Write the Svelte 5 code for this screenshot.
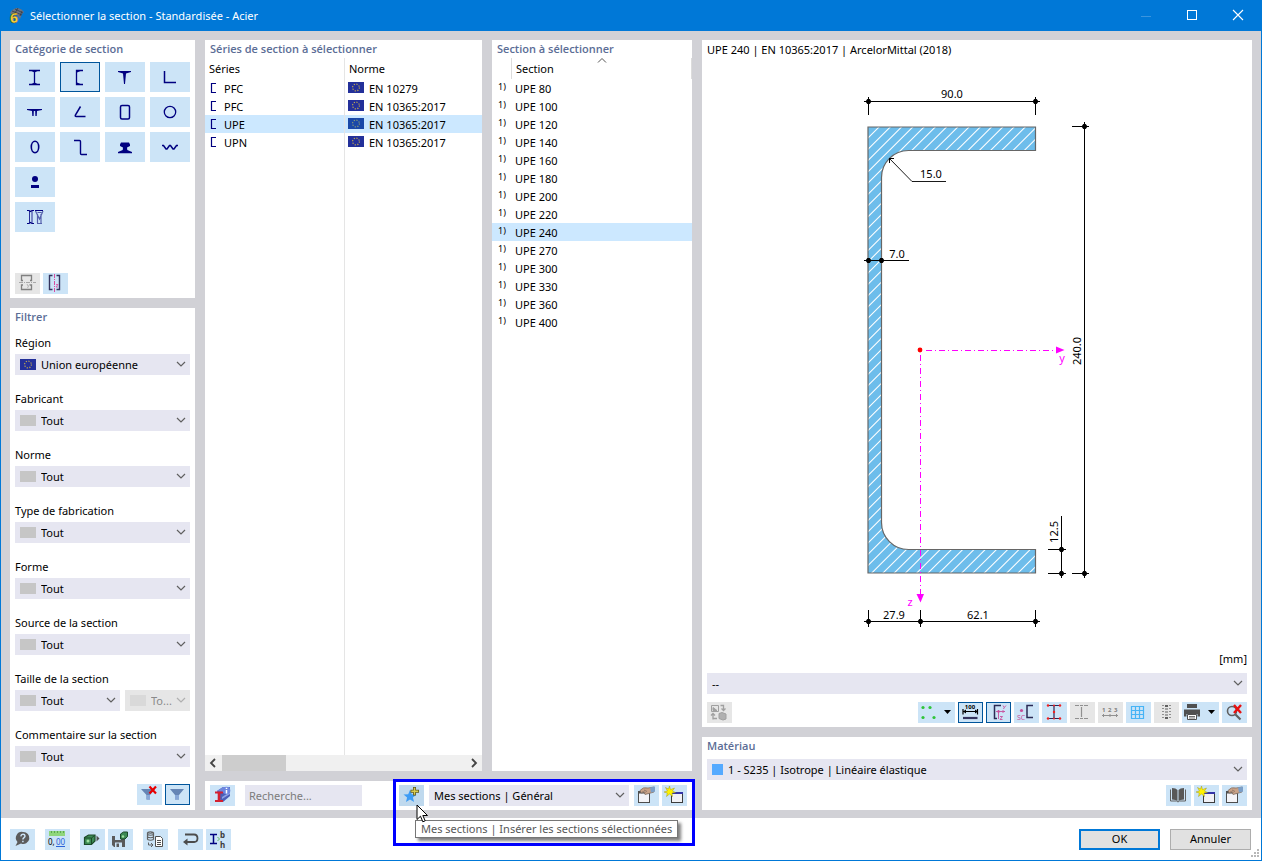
<script>
  const series = [
    { name: 'PFC', norm: 'EN 10279' },
    { name: 'PFC', norm: 'EN 10365:2017' },
    { name: 'UPE', norm: 'EN 10365:2017' },
    { name: 'UPN', norm: 'EN 10365:2017' }
  ];
  const sizes = [80, 100, 120, 140, 160, 180, 200, 220, 240, 270, 300, 330, 360, 400];
  let selectedSeries = $state(2);
  let selectedSize = $state(240);
  let selectedShape = $state(1);

  const shapes = [
    'Profilé en I', 'Profilé en U', 'Profilé en T', 'Cornière',
    'Double T', 'Cornière inclinée', 'Tube rectangulaire', 'Tube circulaire',
    'Tube elliptique', 'Profilé en Z', 'Rail', 'Tôle ondulée',
    'Barre pleine', 'Composée'
  ];

  const hatch = Array.from({ length: 56 }, (_, i) => 1006 - 11.25 + i * 11.25);
</script>

{#snippet chevron()}
  <svg class="chev" width="18" height="21" viewBox="0 0 18 21" aria-hidden="true">
    <path d="M5 8l4 4 4-4" fill="none" stroke="#606060" stroke-width="1.2" />
  </svg>
{/snippet}

{#snippet flag(sel)}
  <svg class="flag" width="16" height="11" viewBox="0 0 16 11" aria-hidden="true">
    <rect width="16" height="11" fill={sel ? '#1a48a8' : '#23309a'} />
    <circle cx="8" cy="5.5" r="3.4" fill="none" stroke={sel ? '#8c9c78' : '#c0a850'} stroke-width="1.2" stroke-dasharray="1.2 1.47" />
  </svg>
{/snippet}

{#snippet combo(id, text, eu, off)}
  <div class="combo" class:off>
    {#if eu}{@render flag(false)}{:else}<span class="swatch"></span>{/if}
    <select {id} disabled={off} aria-label={off ? 'Taille maximale' : undefined}><option>{text}</option></select>
    {@render chevron()}
  </div>
{/snippet}

{#snippet field(id, label, text, eu)}
  <div class="field">
    <label for={id}>{label}</label>
    {@render combo(id, text, eu, false)}
  </div>
{/snippet}

{#snippet windowIcon(star)}
  <svg width="25" height="21" viewBox="0 0 25 21" aria-hidden="true">
    {#if star}
      <rect x="9.500" y="7.500" width="11" height="10" fill="#f1f1f6" stroke="#3c3c3c" />
      <rect x="10" y="7" width="11" height="2" fill="#3434a8" />
      <path d="M7.500 1l1 3.600L12.500 3l-2 3 3 1.500-3.500.5.500 3.500-3-2.500-3 2.500.8-3.500L2 7l3.500-1L3.500 2.500 6.500 4z" fill="#fff200" stroke="#a09a20" stroke-width=".5" />
    {:else}
      <rect x="4.500" y="6.500" width="11" height="11" fill="#f4f4f8" stroke="#4c4c4c" />
      <rect x="4" y="6" width="12" height="2.500" fill="#505050" />
      <path d="M6 5.500Q9 1.500 14 3l6-1v5l-5 1.500-4 1-1-2-3 .5z" fill="#c9a287" stroke="#75665c" stroke-width=".7" />
      <path d="M10 5l3 1.500M8.500 6.500l3 1" stroke="#75665c" stroke-width=".7" />
      <path d="M16 2.500l5-1v5l-4 1z" fill="#7b9fc8" />
    {/if}
  </svg>
{/snippet}

<div class="window">
  <header>
    <svg width="18" height="18" viewBox="0 0 18 18" aria-hidden="true">
      <path d="M3 6Q6 1 11 1q4 1 6 4l-2 2-2 5-3-4-6-1z" fill="#6d7482" />
      <path d="M5 4l10 4M8 2l8 4M11 1L8 6M15 4l-2 5" stroke="#323c4a" stroke-width=".8" />
      <text x="3" y="16" font-size="14" font-weight="800" fill="#fbd43c" stroke="#6a541a" stroke-width=".5">6</text>
    </svg>
    <h1>Sélectionner la section - Standardisée - Acier</h1>
    <div class="sys">
      <button aria-label="Réduire"><svg width="46" height="30" viewBox="0 0 46 30"><path d="M18 15.500h10" stroke="#3a95df" /></svg></button>
      <button aria-label="Agrandir"><svg width="46" height="30" viewBox="0 0 46 30"><rect x="18.500" y="9.500" width="9" height="9" fill="none" stroke="#fff" /></svg></button>
      <button aria-label="Fermer"><svg width="46" height="30" viewBox="0 0 46 30"><path d="M18 9l10 10M28 9L18 19" stroke="#fff" stroke-width="1.100" /></svg></button>
    </div>
  </header>

  <main>
    <div class="col left">
      <section class="panel categories">
        <h2>Catégorie de section</h2>
        <div class="shapes">
          {#each shapes as s, i}
            <button class="tile" class:active={selectedShape === i} class:solo={i > 11} aria-label={s} onclick={() => (selectedShape = i)}>
              <svg width="40" height="30" viewBox="0 0 40 30" fill="none" stroke="#000080" stroke-width="1.300">
                {#if i === 0}<path d="M14 8.500h11M14 22.500h11M19.500 8.500v14" /><path d="M16.500 9l3 1.500 3-1.500zM16.500 22l3-1.500 3 1.500z" fill="#000080" stroke="none" />
                {:else if i === 1}<path d="M23 8.500H16.500v14H23" /><path d="M17 9h3.500L17 10.500V20.500l3.500 1.500H17z" fill="#000080" stroke="none" />
                {:else if i === 2}<path d="M13 9h13v1l-5 1.500L20 22h-1L18 11.500 13 10z" fill="#000080" stroke="none" />
                {:else if i === 3}<path d="M14.500 9v11.500H26" stroke-width="1.500" />
                {:else if i === 4}<path d="M12 12h15v1l-5 1L21.700 19h-1.300l-.2-5h-1.400L18.600 19h-1.300L17 14l-5-1z" fill="#000080" stroke="none" />
                {:else if i === 5}<path d="M20.500 9.500L15.400 18q-.6 1.500.8 1.500h9.300" stroke-width="1.500" />
                {:else if i === 6}<rect x="15.500" y="8.500" width="9" height="13.500" rx="1.500" stroke-width="1.500" />
                {:else if i === 7}<circle cx="20" cy="15" r="5.700" />
                {:else if i === 8}<ellipse cx="20" cy="15" rx="3.700" ry="5.700" stroke-width="1.600" />
                {:else if i === 9}<path d="M14 8.500h5.500q1 0 1 1v12q0 1 1 1H27" stroke-width="1.400" />
                {:else if i === 10}<path d="M16 10.500h8q1.500 2 1 3.500L22 15.500l.3 2.500 4.700 2v1.200H13V20l4.700-2 .3-2.500L15 14q-.5-1.500 1-3.500z" fill="#000080" stroke="none" />
                {:else if i === 11}<path d="M12 13.500h1.500l2.500 3.500h1l2.500-3.500h1l2.500 3.500h1l2.500-3.500H28" stroke-width="1.500" />
                {:else if i === 12}<circle cx="20" cy="12" r="3" fill="#000080" stroke="none" /><path d="M16 19.500h8" stroke-width="3" />
                {:else}<path d="M12 8.500h2l1.500 1 1.500-1h2M12 21.500h2l1.500-1 1.500 1h2" stroke-width="1.200" /><path d="M14.500 9v12M17 9v12" stroke-width=".8" /><path d="M20.500 9l4 8 3.500-8M22.500 12v9M26 12v9M22 21.500h5M22.500 10.500h4" stroke="#5560ac" stroke-width="1.200" /><path d="M20 8.500h8" stroke-width="1" />{/if}
              </svg>
            </button>
          {/each}
        </div>
        <div class="tools">
          <button class="tool gray" aria-label="Symétrie horizontale" disabled>
            <svg width="25" height="21" viewBox="0 0 25 21" fill="none" stroke="#808080">
              <path d="M8 7.500H6.500v-5h10v5H15M8 12H6.500v4.500h10V12H15" stroke-width="1.300" /><path d="M4 9.500h17" stroke="#a8a8a8" stroke-dasharray="4 1 1 1" /><path d="M12 11l1.300 2.500L15 11M13.400 13.500L12.500 15" stroke="#b4b4b4" />
            </svg>
          </button>
          <button class="tool" aria-label="Symétrie verticale">
            <svg width="25" height="21" viewBox="0 0 25 21" fill="none" stroke="#33335e" stroke-width="1.400">
              <path d="M9.500 2.500h-3v14h3M13.500 2.500h3v14h-3" /><path d="M11.500 1v19" stroke="#d84ca0" stroke-width="1" stroke-dasharray="4 1 1 1" /><path d="M13 11.500h2l-2 2.500h2" stroke="#d84ca0" stroke-width=".8" />
            </svg>
          </button>
        </div>
      </section>

      <section class="panel filters">
        <h2>Filtrer</h2>
        {@render field('region', 'Région', 'Union européenne', true)}
        {@render field('maker', 'Fabricant', 'Tout', false)}
        {@render field('norm', 'Norme', 'Tout', false)}
        {@render field('fab', 'Type de fabrication', 'Tout', false)}
        {@render field('form', 'Forme', 'Tout', false)}
        {@render field('source', 'Source de la section', 'Tout', false)}
        <div class="field">
          <label for="size">Taille de la section</label>
          <div class="pair">
            {@render combo('size', 'Tout', false, false)}
            {@render combo('size-max', 'To...', false, true)}
          </div>
        </div>
        {@render field('comment', 'Commentaire sur la section', 'Tout', false)}
        <div class="tools end">
          <button class="tool" aria-label="Supprimer le filtre">
            <svg width="25" height="21" viewBox="0 0 25 21"><path d="M4 5h14l-5 6v4.500h-3.500V11z" fill="#6585b5" /><path d="M9.500 11h3.500v4.500H9.500z" fill="#88a8d8" /><path d="M12.500 2.500l6.500 7M19 2.500l-6.500 7" stroke="#e80000" stroke-width="2.200" /></svg>
          </button>
          <button class="tool active" aria-label="Filtrer">
            <svg width="25" height="21" viewBox="0 0 25 21"><path d="M5 5h14l-5 6v4.500h-4V11z" fill="#6585b5" /><path d="M10 11h4v4.500h-4z" fill="#88a8d8" /></svg>
          </button>
        </div>
      </section>
    </div>

    <div class="col middle">
      <div class="lists">
        <section class="panel series">
          <h2>Séries de section à sélectionner</h2>
          <table>
            <thead><tr><th>Séries</th><th>Norme</th></tr></thead>
            <tbody>
              {#each series as row, i}
                <tr class:selected={i === selectedSeries} onclick={() => (selectedSeries = i)}>
                  <td><span class="cell">
                    <svg width="8" height="12" viewBox="0 0 8 12" aria-hidden="true"><path d="M8 1.500H3.500v9H8" fill="none" stroke="#000080" stroke-width="1.200" /></svg>
                    <span class="txt">{row.name}</span></span></td>
                  <td><span class="cell">{@render flag(i === selectedSeries)}<span class="txt">{row.norm}</span></span></td>
                </tr>
              {/each}
              <tr class="rest"><td></td><td></td></tr>
            </tbody>
          </table>
          <div class="scroll" aria-hidden="true">
            <svg width="17" height="16" viewBox="0 0 17 16"><path d="M10 4L6 8l4 4" fill="none" stroke="#444" stroke-width="1.800" /></svg>
            <span class="thumb"></span>
            <svg width="17" height="16" viewBox="0 0 17 16"><path d="M7 4l4 4-4 4" fill="none" stroke="#444" stroke-width="1.800" /></svg>
          </div>
        </section>

        <section class="panel sizes">
          <h2>Section à sélectionner</h2>
          <svg class="sort" width="10" height="5" viewBox="0 0 10 5" aria-hidden="true"><path d="M1 4.500l4-4 4 4" fill="none" stroke="#555" /></svg>
          <table>
            <thead><tr><th></th><th>Section</th></tr></thead>
            <tbody>
              {#each sizes as n}
                <tr class:selected={n === selectedSize} onclick={() => (selectedSize = n)}>
                  <td class="mark">1)</td><td class="size">UPE {n}</td>
                </tr>
              {/each}
            </tbody>
          </table>
        </section>
      </div>

      <section class="panel actions">
        <button class="tool" aria-label="Informations sur la section">
          <svg width="25" height="21" viewBox="0 0 25 21">
            <path d="M7 6l6-4h7v9l-7 6h-2z" fill="#4a5fb8" /><path d="M7 6l6-4h7l-6 5z" fill="#6f87dc" /><path d="M12 12l8-5v2l-8 5z" fill="#8ea2e6" />
            <path d="M5 7.500h8M5 16h8" stroke="#d42030" stroke-width="2" /><path d="M9 7v9" stroke="#d42030" stroke-width="2.600" />
            <circle cx="16.500" cy="5.500" r="3.800" fill="#6c86e0" /><path d="M16.500 2.700v1.300M16.500 4.900v3.500" stroke="#fff" stroke-width="1.500" />
          </svg>
        </button>
        <input type="text" placeholder="Recherche..." aria-label="Recherche" />
        <div class="mine">
          <button class="tool hover" aria-label="Insérer les sections sélectionnées" aria-describedby="tip">
            <svg width="25" height="21" viewBox="0 0 25 21">
              <path d="M11 5l1.800 4.300 4.700.3-3.600 3 1.200 4.400-4.100-2.400L7 17l1.100-4.400-3.600-3 4.700-.3z" fill="#3d9cf5" />
              <path d="M15.500 2v8.500M11.500 6.300h8.500" stroke="#5d5a20" stroke-width="3" /><path d="M15.500 2.800v6.900M12.300 6.300h6.900" stroke="#d8cc50" stroke-width="1.400" />
            </svg>
          </button>
          <div class="combo list"><select aria-label="Liste de sections"><option>Mes sections | Général</option></select>{@render chevron()}</div>
          <div class="tools">
            <button class="tool" aria-label="Modifier la liste">{@render windowIcon(false)}</button>
            <button class="tool" aria-label="Nouvelle liste">{@render windowIcon(true)}</button>
          </div>
          <div class="frame"></div>
          <div class="tip" id="tip" role="tooltip">Mes sections | Insérer les sections sélectionnées</div>
          <svg class="cursor" width="13" height="20" viewBox="0 0 13 20" aria-hidden="true"><path d="M1 1v14.500l3.500-3.300 2.300 5.600 2.400-1-2.400-5.300h4.700z" fill="#fff" stroke="#000" /></svg>
        </div>
      </section>
    </div>

    <div class="col right">
      <section class="panel preview">
        <p class="name">UPE 240 | EN 10365:2017 | ArcelorMittal (2018)</p>
        <svg class="drawing" viewBox="702 60 550 590" role="img" aria-label="Coupe UPE 240">
          <defs>
            <clipPath id="shape"><path d="M868 127H1035.500V150.500H908.500A27 27 0 0 0 881.500 177.500V522.500A27 27 0 0 0 908.500 549.500H1035.500V573H868z" /></clipPath>
            <g id="node"><path d="M-3 0L-1.200 -2.500H1.200L3 0 1.200 2.500H-1.200z" fill="#000" /></g>
          </defs>
          <g clip-path="url(#shape)">
            <rect x="860" y="120" width="180" height="460" fill="#6dbdeb" />
            {#each hatch as s}
              <path d="M{s - 580} 580L{s - 120} 120" stroke="#fff" stroke-width="1.100" />
            {/each}
          </g>
          <path d="M868 127H1035.500V150.500H908.500A27 27 0 0 0 881.500 177.500V522.500A27 27 0 0 0 908.500 549.500H1035.500V573H868z" fill="none" stroke="#666" stroke-width="1.200" />
          <g fill="none" stroke="#000">
            <path d="M864 101.500H1040M868.500 97v18M1035.500 97v18" />
            <path d="M1084.500 122V578M1072 126.500h17M1072 573.500h17" />
            <path d="M1061.500 516V578M1048 549.500h18M1048 573.500h18" />
            <path d="M864 621.500H1040M868.500 610v17M920.500 610v17M1035.500 610v17" />
            <path d="M864 260.500H909" />
            <path d="M889 158L912 181.500H946" stroke-width=".9" /><path d="M889.500 163V158.500H894" />
          </g>
          {#each [[868.5, 101.5], [1035.5, 101.5], [1084.5, 126.5], [1084.5, 573.5], [1061.5, 549.5], [1061.5, 573.5], [868.5, 621.5], [920.5, 621.5], [1035.5, 621.5], [868.5, 260.5], [881.5, 260.5]] as [x, y]}
            <use href="#node" {x} {y} />
          {/each}
          <g fill="none" stroke="#f0f"><path d="M926 350.500H1056" stroke-dasharray="6 3 1 3" /><path d="M920.500 355V594" stroke-dasharray="6 3 1 3" /></g>
          <path d="M1056 346.500l8.500 3.500-8.500 3.500zM916.500 594h7.500l-3.500 8.500z" fill="#f0f" />
          <circle cx="920" cy="350" r="2.400" fill="#f00" />
          <g class="dims" text-anchor="middle">
            <text x="952" y="98">90.0</text>
            <text x="931" y="178">15.0</text>
            <text x="897" y="258">7.0</text>
            <text x="894" y="619">27.9</text>
            <text x="978" y="619">62.1</text>
            <text transform="translate(1081 351) rotate(-90)">240.0</text>
            <text transform="translate(1058 532) rotate(-90)">12.5</text>
            <text x="1062" y="362" fill="#f0f">y</text>
            <text x="910" y="606" fill="#f0f">z</text>
          </g>
        </svg>
        <p class="unit">[mm]</p>
        <div class="combo note"><select aria-label="Commentaire"><option>--</option></select>{@render chevron()}</div>
        <div class="tools">
          <button class="tool gray" aria-label="Échanger" disabled>
            <svg width="25" height="21" viewBox="0 0 25 21" fill="none" stroke="#a0a0a0"><path d="M4.500 3.500h7v6h-7z" /><path d="M6 8.500v-3l4 3z" fill="#a0a0a0" /><path d="M13.500 3.500h3v4.500M14.500 6.500l2 2 2-2M6 17.500V12M4 13.500l2-2 2 2M6 16.500h4" stroke-width="1.300" /><path d="M12 11.500l3-1 4 1.500v5l-3 1-4-1.500z" fill="#b0b0b0" /></svg>
          </button>
          <span class="gap"></span>
          <button class="tool wide" aria-label="Points de contrainte">
            <svg width="37" height="21" viewBox="0 0 37 21"><g fill="#2fc43a"><circle cx="5" cy="5.500" r="1.600" /><circle cx="12" cy="5.500" r="1.600" /><circle cx="5" cy="15.500" r="1.600" /><circle cx="16" cy="15.500" r="1.600" /></g><path d="M26 8h7l-3.500 4z" /></svg>
          </button>
          <button class="tool active" aria-label="Cotes">
            <svg width="25" height="21" viewBox="0 0 25 21"><text x="12" y="7" font-size="6" font-weight="700" text-anchor="middle">100</text><path d="M5 9.500h15M5 7v5.500M19.500 7v5.500" stroke="#000" stroke-width="1.200" /><path d="M5 9.500l3-2v4zM20 9.500l-3-2v4z" /><path d="M5 16h14.500" stroke="#33335e" stroke-width="2.200" /></svg>
          </button>
          <button class="tool active" aria-label="Axes principaux">
            <svg width="25" height="21" viewBox="0 0 25 21" fill="none"><path d="M15 3.500H8.500v13H11" stroke="#2a2a55" stroke-width="1.500" /><path d="M10 9.500h9M12.500 8v9M16.500 8l1.500 1.500-1.500 1.500M17 3.500l1.300 2L20 3.500M18.300 5.500L17.500 7M14 14.500h2.500L14 17.500h2.500" stroke="#c64f9c" stroke-width=".9" /><circle cx="12.500" cy="9.500" r="1.300" fill="#c64f9c" /></svg>
          </button>
          <button class="tool" aria-label="Centre de cisaillement">
            <svg width="25" height="21" viewBox="0 0 25 21"><path d="M19 3.500h-6v12h6" fill="none" stroke="#2a2a55" stroke-width="1.500" /><circle cx="7.500" cy="8.500" r="1.600" fill="#c64f9c" /><text x="3" y="18" font-size="7" fill="#c64f9c">SC</text></svg>
          </button>
          <button class="tool" aria-label="Points du profil">
            <svg width="25" height="21" viewBox="0 0 25 21"><path d="M6 3.500h12M6 16.500h12M12 3.500v13" stroke="#2a2a55" stroke-width="1.200" /><g fill="#f02020"><circle cx="6" cy="3.500" r="1.200" /><circle cx="12" cy="3.500" r="1" /><circle cx="18" cy="3.500" r="1.200" /><circle cx="12" cy="10" r="1.200" /><circle cx="6" cy="16.500" r="1.200" /><circle cx="12" cy="16.500" r="1" /><circle cx="18" cy="16.500" r="1.200" /></g></svg>
          </button>
          <button class="tool gray" aria-label="Éléments" disabled>
            <svg width="25" height="21" viewBox="0 0 25 21"><path d="M5 3.500h4M14 3.500h4M5 16.500h4M14 16.500h4M11.500 5v10M10 3.500h3M10 16.500h3" stroke="#909090" stroke-width="1.200" /></svg>
          </button>
          <button class="tool gray" aria-label="Numérotation" disabled>
            <svg width="25" height="21" viewBox="0 0 25 21"><g fill="#808080" font-size="6" font-weight="700"><text x="4" y="10">1</text><text x="10" y="10">2</text><text x="16" y="10">3</text></g><path d="M4 13.500h16M5.500 12v3M12 12v3M18.500 12v3" stroke="#909090" /></svg>
          </button>
          <button class="tool" aria-label="Grille">
            <svg width="25" height="21" viewBox="0 0 25 21"><path d="M5.500 4.500h12v12h-12zM9.500 4.500v12M13.500 4.500v12M5.500 8.500h12M5.500 12.500h12" fill="none" stroke="#46b4f6" stroke-width="1.200" /></svg>
          </button>
          <button class="tool gray" aria-label="Valeurs" disabled>
            <svg width="25" height="21" viewBox="0 0 25 21"><path d="M8 3.500h2M8 6.500h2M8 9.500h2M8 12.500h2M8 15.500h2M15 3.500h2M15 6.500h2M15 9.500h2M15 12.500h2M15 15.500h2" stroke="#909090" /><path d="M11 4h3M11 16h3" stroke="#606060" stroke-width="2.200" /><path d="M11 7h3M11 10h3M11 13h3" stroke="#a4a4a4" stroke-width="2" /></svg>
          </button>
          <button class="tool wide" aria-label="Imprimer">
            <svg width="37" height="21" viewBox="0 0 37 21" fill="#505050"><path d="M5 2h10v4H5zM2 7.500h16v7h-2.500V12h-11v2.500H2z" /><path d="M5.500 12.500h9v5h-9z" fill="#fff" stroke="#505050" /><path d="M7 14.500h6M7 16h6" stroke="#505050" stroke-width=".8" /><path d="M26 8h7l-3.500 4z" fill="#000" /></svg>
          </button>
          <button class="tool" aria-label="Réinitialiser le zoom">
            <svg width="25" height="21" viewBox="0 0 25 21" fill="none"><circle cx="10" cy="9" r="4.500" stroke="#606060" stroke-width="1.600" /><path d="M13.500 12.500l5 5" stroke="#606060" stroke-width="2.200" /><path d="M12 3l7 8M19 3l-7 8" stroke="#e81010" stroke-width="2.400" /></svg>
          </button>
        </div>
      </section>

      <section class="panel material">
        <h2>Matériau</h2>
        <div class="combo mat"><span class="blue"></span><select aria-label="Matériau"><option>1 - S235 | Isotrope | Linéaire élastique</option></select>{@render chevron()}</div>
        <div class="tools end">
          <button class="tool" aria-label="Bibliothèque">
            <svg width="25" height="21" viewBox="0 0 25 21"><path d="M6 3q4 0 5.500 2v11Q10 14.500 6 14.500zM18 3q-4 0-5.500 2v11q1.500-1.500 5.500-1.500z" fill="#585858" /><path d="M4.500 4.500V16h6l1.500 1 1.500-1h6V4.500" fill="none" stroke="#606060" /></svg>
          </button>
          <button class="tool" aria-label="Nouveau matériau">{@render windowIcon(true)}</button>
          <button class="tool" aria-label="Modifier le matériau">{@render windowIcon(false)}</button>
        </div>
      </section>
    </div>
  </main>

  <footer>
    <div class="tools">
      <button class="tool" aria-label="Aide">
        <svg width="25" height="21" viewBox="0 0 25 21"><path d="M13 3a6 6 0 1 1-2 11.500L5.500 17l2-4A6 6 0 0 1 13 3z" fill="#5c5c5c" /><path d="M10.800 7.300q.3-2 2.200-2t2 1.700q0 1-1.200 1.800-.9.600-.9 1.700M12.900 11.800v1.500" fill="none" stroke="#cce4f7" stroke-width="1.500" /></svg>
      </button>
    </div>
    <div class="tools">
      <button class="tool" aria-label="Unités">
        <svg width="25" height="21" viewBox="0 0 25 21"><rect x="4" y="2" width="16" height="5" fill="#8fd67c" /><path d="M6.500 2v2M9.500 2v2M12.500 2v2M15.500 2v2M18.500 2v2" stroke="#5ca850" /><text x="3" y="16" font-size="8">0,</text><text x="11" y="16" font-size="8" fill="#2a62d8">00</text><path d="M11 17.500h9" stroke="#2a62d8" /></svg>
      </button>
    </div>
    <div class="tools">
      <button class="tool" aria-label="Exporter">
        <svg width="25" height="21" viewBox="0 0 25 21"><path d="M4.500 8.500l4-2.500h6.500v6l-3.500 3.500h-7z" fill="#3c8a54" stroke="#1c4a28" stroke-width="1.200" /><path d="M5 9h6.500l3-2.500M11.500 9v6" fill="none" stroke="#1c4a28" /><circle cx="8" cy="12" r="1.500" fill="#9fe09f" /><path d="M16.500 6.500l3 3-3 3z" fill="#505050" /></svg>
      </button>
      <button class="tool" aria-label="Enregistrer">
        <svg width="25" height="21" viewBox="0 0 25 21"><path d="M4 7h13v11H6l-2-2z" fill="#5a5a5a" /><path d="M7 7h6v4H7zM7 13.500h7V18H7z" fill="#cce4f7" /><path d="M8.500 14.500H11V18H8.500z" fill="#5a5a5a" /><path d="M12.500 5l3-2h4v4.500L17 10h-4.500z" fill="#3c8a54" stroke="#1c4a28" /><circle cx="15" cy="7.500" r="1.200" fill="#9fe09f" /></svg>
      </button>
    </div>
    <div class="tools">
      <button class="tool" aria-label="Base de données">
        <svg width="25" height="21" viewBox="0 0 25 21" fill="none"><path d="M4.500 3.500q3-1.500 6 0M4.500 5.500q3 1.500 6 0M4.500 8q3 1.500 6 0M4.500 10.500q3 1.500 6 0M4.500 3.500v7M10.500 3.500v7M4.500 3.500q3 1.500 6 0" stroke="#606060" stroke-width="1.200" /><path d="M5.500 13.500v2.500h4M8 14l2 2-2 2" stroke="#606060" /><path d="M12.500 7.500h5l2 2v8h-7z" fill="#fff" stroke="#505050" /><path d="M14 11.500h4M14 13.500h4M14 15.500h4" stroke="#505050" /></svg>
      </button>
    </div>
    <div class="tools">
      <button class="tool" aria-label="Retour">
        <svg width="25" height="21" viewBox="0 0 25 21" fill="none"><path d="M7 5.500h9q3.500 0 3.500 3.800T16 13H9" stroke="#4c4c4c" stroke-width="1.800" /><path d="M5 13l4.500-3.500v7z" fill="#4c4c4c" /></svg>
      </button>
      <button class="tool" aria-label="Paramètres de la section">
        <svg width="25" height="21" viewBox="0 0 25 21"><path d="M4 5.500h7M4 14.500h7M7.500 5.500v9" stroke="#000080" stroke-width="1.500" /><path d="M11.500 8l2 2-2 2" fill="none" stroke="#62b862" /><text x="14" y="9" font-size="8" font-weight="700" fill="#3a3a3a">b</text><text x="14" y="19" font-size="8" font-weight="700" fill="#3a3a3a">h</text></svg>
      </button>
    </div>
    <span class="gap"></span>
    <button class="cmd primary">OK</button>
    <button class="cmd">Annuler</button>
    <svg class="grip" width="10" height="10" viewBox="0 0 10 10" aria-hidden="true"><path d="M7 0h2v2H7zM4 3h2v2H4zM7 3h2v2H7zM1 6h2v2H1zM4 6h2v2H4zM7 6h2v2H7z" fill="#b8b8b8" /></svg>
  </footer>
</div>

<style>
  :global(body) {
    margin: 0;
    font-family: 'Noto Sans', 'Open Sans', sans-serif;
    font-size: 11px;
    line-height: 16px;
    color: #000;
  }
  .window {
    box-sizing: border-box;
    min-height: 100vh;
    display: flex;
    flex-direction: column;
    border: 1px solid #0078d7;
    background: #fff;
  }
  header {
    display: flex;
    align-items: center;
    height: 30px;
    padding-left: 6px;
    gap: 5px;
    background: #0078d7;
    color: #fff;
  }
  header > svg { overflow: visible; }
  h1 {
    flex: 1;
    margin: 0;
    font-size: 11px;
    font-weight: 400;
  }
  button {
    padding: 0;
    border: 0;
    font: inherit;
    background: none;
  }
  button svg { display: block; }
  .sys { display: flex; }
  main {
    position: relative;
    z-index: 1;
    flex: 1;
    display: grid;
    grid-template-columns: 185px 487px minmax(0, 1fr);
    gap: 10px;
    padding: 9px 9px 8px;
    background: #d1d1d6;
  }
  .col {
    display: flex;
    flex-direction: column;
    gap: 10px;
    min-width: 0;
  }
  .panel {
    background: #fff;
    box-sizing: border-box;
  }
  h2 {
    margin: 0;
    font-family: 'Open Sans', 'Noto Sans', sans-serif;
    font-size: 11px;
    font-weight: 600;
    line-height: 18px;
    color: #5b6d96;
  }
  .categories {
    display: flex;
    flex-direction: column;
    height: 258px;
    padding: 0 5px 4px;
  }
  .shapes {
    flex: 1;
    display: grid;
    grid-template-columns: repeat(4, 40px);
    gap: 5px;
    align-content: start;
    padding-top: 4px;
  }
  .tile {
    height: 30px;
    background: #cce4f7;
  }
  .solo { grid-column: 1; }
  .tile.active, .tool.active {
    box-shadow: inset 0 0 0 1px #00559b;
  }
  .tools { display: flex; gap: 3px; }
  .tools.end { justify-content: flex-end; }
  .tool {
    width: 25px;
    height: 21px;
    background: #cce4f7;
  }
  .tool.wide { width: 37px; }
  .tool.gray { background: #e6e6e6; }
  .tool.hover { background: #bfd9ee; }
  .gap { flex: 1; }

  .filters {
    flex: 1;
    display: flex;
    flex-direction: column;
    padding: 0 5px 5px;
  }
  .filters h2 { margin-bottom: 9px; }
  .filters .end { margin-top: auto; }
  .field {
    display: grid;
    gap: 3px;
    margin-bottom: 16px;
  }
  .pair {
    display: grid;
    grid-template-columns: 105px 65px;
    gap: 5px;
  }
  .combo {
    display: flex;
    align-items: center;
    height: 21px;
    padding-left: 5px;
    background: #e6e6f1;
    min-width: 0;
  }
  select {
    appearance: none;
    flex: 1;
    min-width: 0;
    height: 21px;
    margin-right: -18px;
    padding: 0 18px 0 5px;
    border: 0;
    background: transparent;
    font: inherit;
    color: #000;
  }
  .chev { pointer-events: none; flex: none; }
  .swatch {
    width: 16px;
    height: 11px;
    background: #c6c6c6;
    flex: none;
  }
  .flag { flex: none; }
  .combo.off { background: #e6e6e6; }
  .off select { color: #8a8a8a; opacity: 1; }
  .off .swatch { background: #d9d9d9; }
  .off .chev { opacity: 0.4; }
  .combo.list, .combo.note { padding-left: 0; }

  .lists {
    flex: 1;
    display: grid;
    grid-template-columns: 277px 200px;
    gap: 10px;
  }
  .series {
    display: flex;
    flex-direction: column;
  }
  .lists h2 { padding-left: 5px; }
  table {
    width: 100%;
    border-spacing: 0;
    table-layout: fixed;
  }
  th, td {
    box-sizing: border-box;
    height: 18px;
    padding: 0 4px;
    text-align: left;
    font-weight: 400;
  }
  th { height: 21px; }
  .series table { flex: 1; display: grid; grid-template-rows: auto 1fr; }
  .series thead, .series tbody { display: grid; }
  .series tbody { grid-template-rows: repeat(4, 18px) 1fr; }
  .series tr { display: grid; grid-template-columns: 140px 1fr; }
  .series th { line-height: 21px; }
  .series th:first-child, .series td:first-child { border-right: 1px solid #e5e5e5; }
  .series .rest td { height: auto; }
  .series td { padding-left: 3px; }
  .cell {
    display: flex;
    height: 18px;
    gap: 5px;
  }
  td:first-child .cell { gap: 8px; }
  .cell svg { margin-top: 3px; }
  .txt { line-height: 20px; }
  .selected { background: #cce8ff; }
  .scroll {
    display: flex;
    height: 16px;
    background: #f0f0f0;
  }
  .scroll svg:last-child { margin-left: auto; }
  .thumb { width: 64px; background: #cdcdcd; }
  .sizes { position: relative; }
  .sort {
    position: absolute;
    left: 105px;
    top: 18px;
  }
  .sizes th { border-right: 1px solid #dcdcdc; }
  .sizes th:first-child { width: 20px; }
  .sizes .size { padding: 2px 0 0 3px; }
  .sizes .mark {
    padding: 0 0 0 6px;
    font-size: 9px;
    line-height: 16px;
    vertical-align: top;
  }

  .actions {
    display: flex;
    align-items: center;
    height: 29px;
    padding: 0 5px;
    gap: 10px;
  }
  input {
    box-sizing: border-box;
    width: 117px;
    height: 21px;
    padding: 0 4px;
    border: 0;
    background: #e6e6f1;
    font: inherit;
  }
  input::placeholder { color: #7c7c7c; opacity: 1; }
  .mine {
    position: relative;
    display: flex;
    gap: 5px;
    margin-left: auto;
  }
  .list { width: 200px; }
  .frame {
    position: absolute;
    inset: -6px -8px -40px -6px;
    border: 3px solid #00f;
    pointer-events: none;
  }
  .tip {
    position: absolute;
    left: 16px;
    top: 35px;
    padding: 0 5px;
    border: 1px solid #767676;
    background: #fff;
    color: #575757;
    white-space: nowrap;
    box-shadow: 3px 3px 3px rgba(0, 0, 0, 0.5);
  }
  .cursor {
    position: absolute;
    left: 17px;
    top: 19px;
  }

  .preview {
    flex: 1;
    display: flex;
    flex-direction: column;
    padding: 0 5px 4px;
  }
  p { margin: 0; }
  .name { line-height: 20px; }
  .drawing {
    flex: 1;
    height: 0;
    min-height: 400px;
    margin: 0 -5px;
  }
  .unit {
    line-height: 18px;
    text-align: right;
    margin-bottom: 5px;
  }
  .note { margin-bottom: 8px; }
  .material { padding: 0 5px 4px; }
  .mat { margin: 4px 0 5px; }
  .blue { width: 11px; height: 11px; background: #55aaff; flex: none; }

  footer {
    position: relative;
    display: flex;
    align-items: center;
    gap: 10px;
    height: 42px;
    padding: 0 10px 0 9px;
    background: #fff;
  }
  .cmd {
    width: 81px;
    height: 21px;
    border: 1px solid #adadad;
    background: #e1e1e1;
  }
  .primary { border: 2px solid #0078d7; }
  .grip {
    position: absolute;
    right: 1px;
    bottom: 1px;
  }
</style>
